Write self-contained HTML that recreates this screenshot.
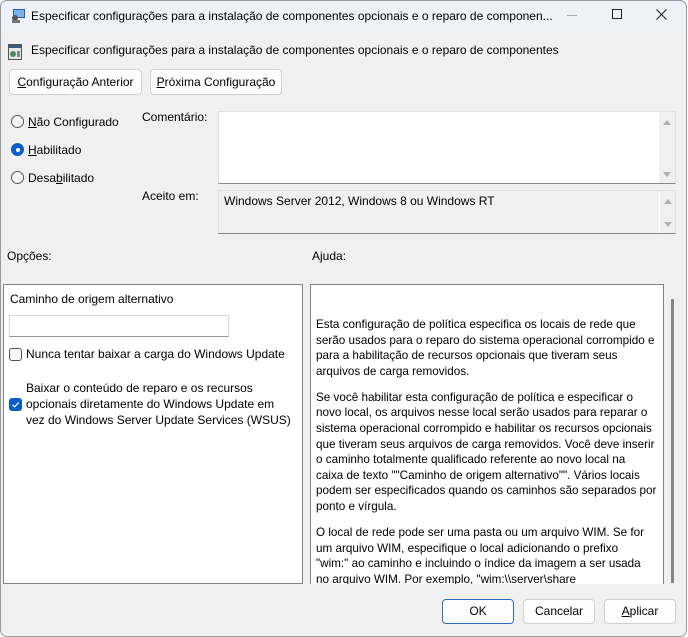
<!DOCTYPE html>
<html><head><meta charset="utf-8"><style>
*{box-sizing:border-box;margin:0;padding:0}
body{width:688px;height:637px;background:#fff;font-family:"Liberation Sans",sans-serif;font-size:12px;color:#000;position:relative;overflow:hidden}
.win{position:absolute;left:0;top:0;width:687px;height:637px;background:#f0f0f0;border-radius:7px;overflow:hidden}
.frame{position:absolute;left:0;top:0;width:687px;height:637px;border:1px solid #9a9a9a;border-radius:7px;pointer-events:none}
.title{position:absolute;left:0;top:0;width:100%;height:31px;background:#eef2f8}
.a{position:absolute;white-space:nowrap}
.btn{position:absolute;background:#fdfdfd;border:1px solid #d0d0d0;border-radius:4px;text-align:center;line-height:24px;font-size:12px}
.radio{position:absolute;width:13px;height:13px;border:1px solid #555;border-radius:50%;background:#f8f8f8}
.box{position:absolute;background:#fff;border:1px solid #8c8c8c}
.sb{position:absolute;background:#f0f0f0}
.tri{position:absolute;width:0;height:0;border-left:4px solid transparent;border-right:4px solid transparent}
.help{position:absolute;left:5px;top:32px;line-height:15.6px;white-space:nowrap;font-size:11.7px}
.help p{margin-bottom:10.5px}
u{text-decoration:underline}
</style></head><body>
<div class="win">
<div class="title"></div>
<svg class="a" style="left:10px;top:8px" width="16" height="16"><rect x="3" y="1" width="12" height="9" fill="#2c5fb0"/><rect x="4" y="2" width="10" height="7" fill="#7fb2ea"/><circle cx="5" cy="10" r="3" fill="#555"/><rect x="2" y="12" width="8" height="3" fill="#777"/></svg>
<div class="a" style="left:31px;top:9px">Especificar configurações para a instalação de componentes opcionais e o reparo de componen...</div>
<div class="a" style="left:567px;top:15px;width:10px;height:1px;background:#aaa"></div>
<div class="a" style="left:612px;top:9px;width:10px;height:10px;border:1px solid #222"></div>
<svg class="a" style="left:656px;top:9px" width="11" height="11"><path d="M0.5 0.5L10.5 10.5M10.5 0.5L0.5 10.5" stroke="#222" stroke-width="1.1"/></svg>

<svg class="a" style="left:8px;top:44px" width="14" height="16"><rect x="0.5" y="0.5" width="13" height="15" fill="#e8e8e8" stroke="#555"/><rect x="1" y="1" width="12" height="3" fill="#3a5a7a"/><circle cx="5" cy="10" r="3" fill="#4a8a5a"/><rect x="9" y="7" width="3" height="6" fill="#888"/></svg>
<div class="a" style="left:31px;top:43px">Especificar configurações para a instalação de componentes opcionais e o reparo de componentes</div>

<div class="btn" style="left:9px;top:69px;width:133px;height:26px"><u>C</u>onfiguração Anterior</div>
<div class="btn" style="left:150px;top:69px;width:132px;height:26px"><u>P</u>róxima Configuração</div>

<div class="radio" style="left:11px;top:115px"></div>
<div class="a" style="left:28px;top:115px"><u>N</u>ão Configurado</div>
<div class="radio" style="left:11px;top:143px;background:#0a5fc7;border-color:#0a5fc7"><div style="position:absolute;left:3.5px;top:3.5px;width:4px;height:4px;border-radius:50%;background:#fff"></div></div>
<div class="a" style="left:28px;top:143px"><u>H</u>abilitado</div>
<div class="radio" style="left:11px;top:171px"></div>
<div class="a" style="left:28px;top:171px">Desa<u>b</u>ilitado</div>

<div class="a" style="left:142px;top:110px">Comentário:</div>
<div class="box" style="left:218px;top:111px;width:458px;height:73px;border-color:#e0e0e0 #e0e0e0 #888 #e0e0e0">
<div class="sb" style="right:0;top:0;width:16px;height:71px"><div class="tri" style="left:4px;top:8px;border-bottom:5px solid #b0b0b0"></div><div class="tri" style="left:4px;top:60px;border-top:5px solid #b0b0b0"></div></div></div>

<div class="a" style="left:142px;top:189px">Aceito em:</div>
<div class="box" style="left:218px;top:190px;width:458px;height:44px;background:#f0f0f0;border-color:#e0e0e0 #e0e0e0 #888 #e0e0e0">
<div class="a" style="left:5px;top:3px">Windows Server 2012, Windows 8 ou Windows RT</div>
<div class="sb" style="right:0;top:0;width:16px;height:42px;border-left:1px solid #fff"><div class="tri" style="left:4px;top:8px;border-bottom:5px solid #b0b0b0"></div><div class="tri" style="left:4px;top:31px;border-top:5px solid #b0b0b0"></div></div></div>

<div class="a" style="left:7px;top:249px">Opções:</div>
<div class="a" style="left:312px;top:249px">Ajuda:</div>

<div class="box" style="left:3px;top:284px;width:300px;height:300px;border-color:#828282">
<div class="a" style="left:6px;top:7px">Caminho de origem alternativo</div>
<div class="a" style="left:5px;top:30px;width:220px;height:22px;border:1px solid #d8d8d8;border-bottom-color:#999;background:#fff"></div>
<div class="a" style="left:5px;top:63px;width:13px;height:13px;border:1px solid #555;border-radius:3px;background:#f8f8f8"></div>
<div class="a" style="left:22px;top:62px">Nunca tentar baixar a carga do Windows Update</div>
<div class="a" style="left:22px;top:95px;line-height:16px">Baixar o conteúdo de reparo e os recursos<br>opcionais diretamente do Windows Update em<br>vez do Windows Server Update Services (WSUS)</div>
<div class="a" style="left:5px;top:113px;width:13px;height:13px;border-radius:3px;background:#0a5fc7"><svg width="13" height="13" style="position:absolute;left:0;top:0"><path d="M3.5 6.8L5.6 8.8L9.6 4.6" stroke="#fff" stroke-width="1.2" fill="none"/></svg></div>
</div>

<div class="box" style="left:310px;top:284px;width:354px;height:300px;border-color:#828282;border-bottom:none;overflow:hidden">
<div class="help">
<p>Esta configuração de política especifica os locais de rede que<br>serão usados para o reparo do sistema operacional corrompido e<br>para a habilitação de recursos opcionais que tiveram seus<br>arquivos de carga removidos.</p>
<p>Se você habilitar esta configuração de política e especificar o<br>novo local, os arquivos nesse local serão usados para reparar o<br>sistema operacional corrompido e habilitar os recursos opcionais<br>que tiveram seus arquivos de carga removidos. Você deve inserir<br>o caminho totalmente qualificado referente ao novo local na<br>caixa de texto ""Caminho de origem alternativo"". Vários locais<br>podem ser especificados quando os caminhos são separados por<br>ponto e vírgula.</p>
<p>O local de rede pode ser uma pasta ou um arquivo WIM. Se for<br>um arquivo WIM, especifique o local adicionando o prefixo<br>"wim:" ao caminho e incluindo o índice da imagem a ser usada<br>no arquivo WIM. Por exemplo, "wim:\\server\share</p>
</div></div>
<div class="a" style="left:671px;top:299px;width:3px;height:284px;background:#858585"></div>

<div class="btn" style="left:442px;top:599px;width:72px;height:25px;border:1px solid #2a6bc4;line-height:23px">OK</div>
<div class="btn" style="left:523px;top:599px;width:72px;height:25px;line-height:23px">Cancelar</div>
<div class="btn" style="left:604px;top:599px;width:72px;height:25px;line-height:23px"><u>A</u>plicar</div>
</div>
<div class="frame"></div>
</body></html>
